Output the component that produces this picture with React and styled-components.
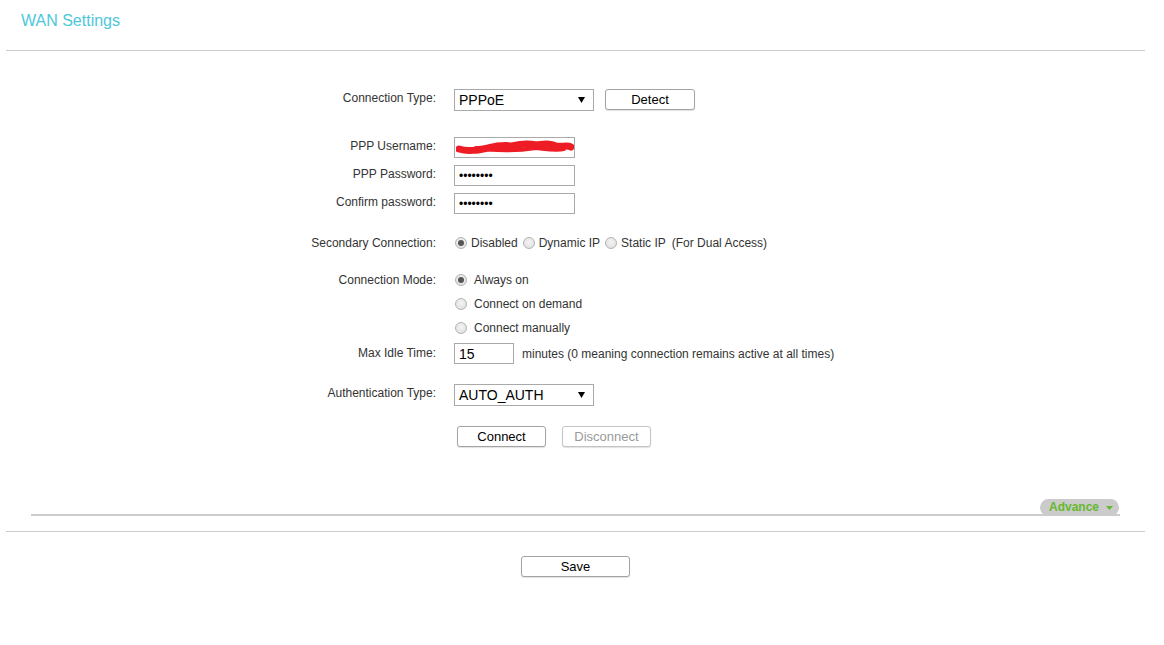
import React from "react";
import styled, { createGlobalStyle } from "styled-components";

const GlobalStyle = createGlobalStyle`
  html, body {
    margin: 0;
    padding: 0;
    background: #fff;
    font-family: "Liberation Sans", Arial, sans-serif;
    font-size: 12px;
    color: #333;
  }
`;

const Page = styled.div`
  width: 1164px;
  min-height: 645px;
  background: #fff;
`;

const Header = styled.div`
  height: 50px;
  margin: 0 19px 0 6px;
  border-bottom: 1px solid #cccccc;
  display: flex;
  align-items: flex-start;
`;

const Title = styled.h2`
  margin: 0;
  padding: 11px 0 0 15px;
  font-size: 16px;
  line-height: 20px;
  font-weight: normal;
  color: #4dc7da;
`;

const Form = styled.div`
  display: flex;
  flex-direction: column;
  padding-top: 38px;
`;

const Row = styled.div`
  display: flex;
  align-items: flex-start;
  margin-top: ${(p) => p.$gap || 0}px;
  min-height: ${(p) => p.$h || 17}px;
`;

const Label = styled.div`
  width: 436px;
  flex: none;
  text-align: right;
  font-size: 12px;
  line-height: 16px;
  color: #333;
  padding-top: ${(p) => (p.$pt == null ? 1 : p.$pt)}px;
`;

const Control = styled.div`
  margin-left: 18px;
  display: flex;
  align-items: center;
  gap: ${(p) => p.$gap || 0}px;
`;

const SelectBox = styled.div`
  position: relative;
  box-sizing: border-box;
  width: 140px;
  height: 22px;
  border: 1px solid #a9a9a9;
  background: #fff;
  font-size: 14px;
  line-height: 20px;
  color: #000;
  padding-left: 4px;
  display: flex;
  align-items: center;
  justify-content: space-between;
  padding-right: 8px;
`;

const Caret = styled.svg`
  width: 7px;
  height: 6px;
  flex: none;
`;

const TextInput = styled.input`
  box-sizing: border-box;
  width: ${(p) => p.$w || 121}px;
  height: 21px;
  border: 1px solid #a9a9a9;
  padding: 0 4px;
  margin: 0;
  font-family: "Liberation Sans", Arial, sans-serif;
  font-size: ${(p) => p.$fs || 14}px;
  color: #000;
  background: #fff;
  outline: none;
`;

const InputWrap = styled.div`
  position: relative;
  width: 121px;
  height: 21px;
`;

const Scribble = styled.svg`
  position: absolute;
  left: 2px;
  top: 2px;
  width: 118px;
  height: 17px;
  pointer-events: none;
`;

const Button = styled.button`
  box-sizing: border-box;
  width: ${(p) => p.$w || 89}px;
  height: ${(p) => p.$h || 21}px;
  margin: 0;
  padding: 0;
  border: 1px solid ${(p) => (p.$disabled ? "#c4c4c4" : "#a3a3a3")};
  border-radius: 3px;
  background: #fff;
  box-shadow: 0 1px 1px rgba(0, 0, 0, 0.12);
  font-family: "Liberation Sans", Arial, sans-serif;
  font-size: 13px;
  color: ${(p) => (p.$disabled ? "#9a9a9a" : "#000")};
  cursor: pointer;
`;

const RadioGroup = styled.div`
  display: flex;
  align-items: center;
  font-size: 12px;
  line-height: 16px;
  color: #333;
  padding-top: 1px;
`;

const RadioItem = styled.span`
  display: inline-flex;
  align-items: center;
  margin-right: ${(p) => p.$mr || 0}px;
`;

const Radio = styled.span`
  box-sizing: border-box;
  width: 12px;
  height: 12px;
  border-radius: 50%;
  border: 1px solid #b3b3b3;
  background: radial-gradient(circle at 50% 40%, #f4f4f4 0%, #dcdcdc 100%);
  margin-left: 1px;
  margin-right: ${(p) => p.$gap || 4}px;
  display: inline-flex;
  align-items: center;
  justify-content: center;
  flex: none;

  &::after {
    content: "";
    width: 6px;
    height: 6px;
    border-radius: 50%;
    background: ${(p) => (p.$checked ? "#555" : "transparent")};
  }
`;

const Note = styled.span`
  font-size: 12px;
  line-height: 16px;
  color: #333;
`;

const ButtonRow = styled.div`
  display: flex;
  margin-left: 457px;
  margin-top: 20px;
  gap: 16px;
`;

const AdvanceBar = styled.div`
  margin: 52px 44px 0 31px;
  height: 15px;
  border-bottom: 2px solid #cccccc;
  display: flex;
  justify-content: flex-end;
  align-items: flex-start;
`;

const AdvancePill = styled.div`
  position: relative;
  box-sizing: border-box;
  width: 79px;
  height: 17px;
  margin-right: 1px;
  border-radius: 9px;
  background: #cbcbcb;
  color: #66b82e;
  font-size: 12px;
  font-weight: bold;
  line-height: 17px;
  padding-left: 9px;
  display: flex;
  align-items: center;
  gap: 7px;
`;

const Footer = styled.div`
  margin: 15px 19px 0 6px;
  border-top: 1px solid #cccccc;
  padding-top: 24px;
  display: flex;
  justify-content: center;
`;

const Triangle = ({ color = "#000", w = 7, h = 6 }) => (
  <Caret viewBox="0 0 7 6" preserveAspectRatio="none" style={{ width: w, height: h }}>
    <path d="M0 0 L7 0 L3.5 6 Z" fill={color} />
  </Caret>
);

const Select = ({ value }) => (
  <SelectBox>
    <span>{value}</span>
    <Triangle />
  </SelectBox>
);

export default function App() {
  return (
    <Page>
      <GlobalStyle />
      <Header>
        <Title>WAN Settings</Title>
      </Header>

      <Form>
        <Row $h={22}>
          <Label>Connection Type:</Label>
          <Control $gap={11}>
            <Select value="PPPoE" />
            <Button $w={90} $h={21} style={{ marginTop: -1 }}>Detect</Button>
          </Control>
        </Row>

        <Row $gap={26} $h={21}>
          <Label>PPP Username:</Label>
          <Control>
            <InputWrap>
              <TextInput readOnly value="" />
              <Scribble viewBox="0 0 118 17">
                <path
                  d="M3 10 C12 13 22 11 32 9 C40 7 48 6 56 7 C64 5 72 4 80 6 C88 5 94 4 100 7 C106 8 112 6 115 8"
                  stroke="#ee1c25"
                  strokeWidth="7"
                  fill="none"
                  strokeLinecap="round"
                />
                <path
                  d="M20 9 C40 12 60 12 80 9 C90 10 100 12 108 10"
                  stroke="#ee1c25"
                  strokeWidth="4"
                  fill="none"
                  strokeLinecap="round"
                />
              </Scribble>
            </InputWrap>
          </Control>
        </Row>

        <Row $gap={7} $h={21}>
          <Label>PPP Password:</Label>
          <Control>
            <TextInput readOnly $fs={12} value="••••••••" />
          </Control>
        </Row>

        <Row $gap={7} $h={21}>
          <Label>Confirm password:</Label>
          <Control>
            <TextInput readOnly $fs={12} value="••••••••" />
          </Control>
        </Row>

        <Row $gap={20}>
          <Label>Secondary Connection:</Label>
          <Control>
            <RadioGroup>
              <RadioItem $mr={4}>
                <Radio $checked />
                Disabled
              </RadioItem>
              <RadioItem $mr={4}>
                <Radio />
                Dynamic IP
              </RadioItem>
              <RadioItem $mr={6}>
                <Radio />
                Static IP
              </RadioItem>
              <Note>(For Dual Access)</Note>
            </RadioGroup>
          </Control>
        </Row>

        <Row $gap={20}>
          <Label>Connection Mode:</Label>
          <Control>
            <RadioGroup>
              <RadioItem>
                <Radio $checked $gap={7} />
                Always on
              </RadioItem>
            </RadioGroup>
          </Control>
        </Row>

        <Row $gap={7}>
          <Label />
          <Control>
            <RadioGroup>
              <RadioItem>
                <Radio $gap={7} />
                Connect on demand
              </RadioItem>
            </RadioGroup>
          </Control>
        </Row>

        <Row $gap={7}>
          <Label />
          <Control>
            <RadioGroup>
              <RadioItem>
                <Radio $gap={7} />
                Connect manually
              </RadioItem>
            </RadioGroup>
          </Control>
        </Row>

        <Row $gap={7} $h={21}>
          <Label $pt={2}>Max Idle Time:</Label>
          <Control $gap={8}>
            <TextInput readOnly $w={60} value="15" />
            <Note>minutes (0 meaning connection remains active at all times)</Note>
          </Control>
        </Row>

        <Row $gap={20} $h={22}>
          <Label>Authentication Type:</Label>
          <Control>
            <Select value="AUTO_AUTH" />
          </Control>
        </Row>

        <ButtonRow>
          <Button>Connect</Button>
          <Button $disabled>Disconnect</Button>
        </ButtonRow>
      </Form>

      <AdvanceBar>
        <AdvancePill>
          Advance
          <Triangle color="#66b82e" w={7} h={4} />
        </AdvancePill>
      </AdvanceBar>

      <Footer>
        <Button $w={109}>Save</Button>
      </Footer>
    </Page>
  );
}
